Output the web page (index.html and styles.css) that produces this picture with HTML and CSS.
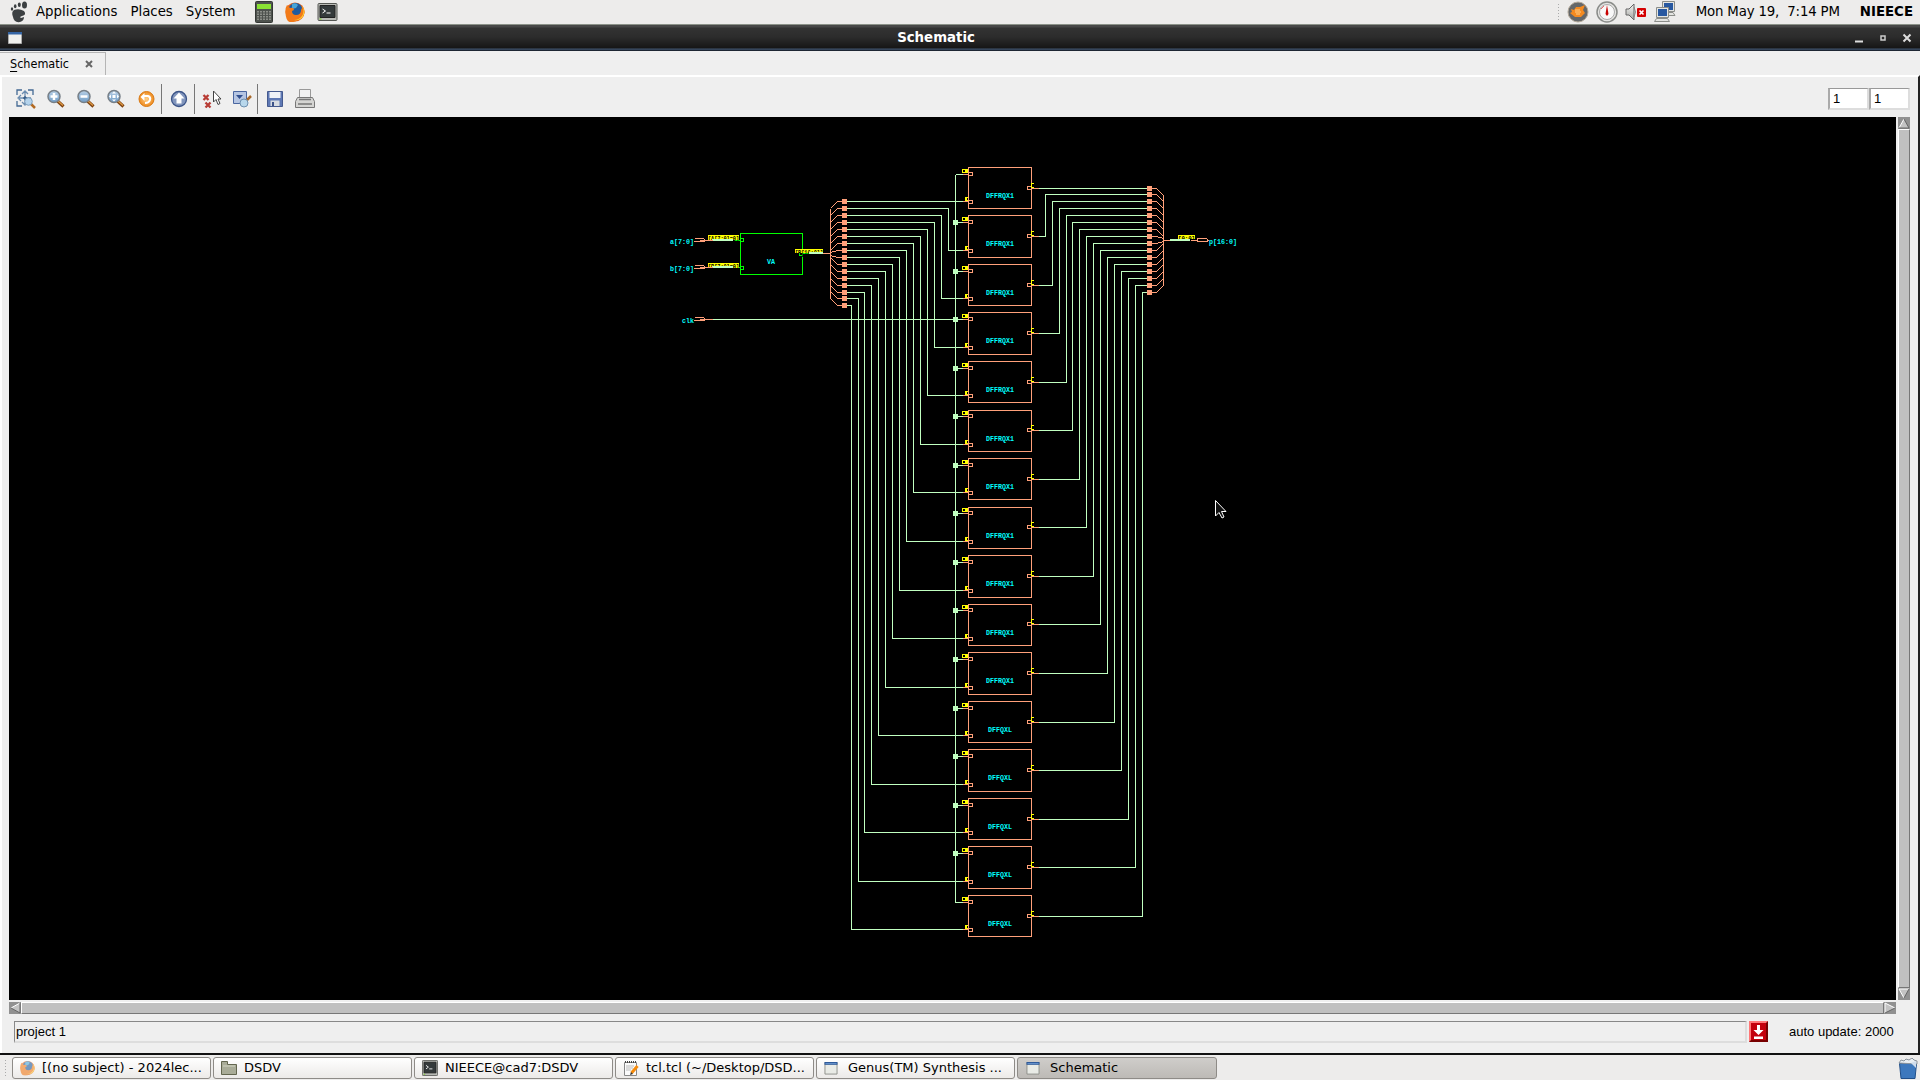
FILE: index.html
```html
<!DOCTYPE html>
<html lang="en">
<head>
<meta charset="utf-8">
<title>Schematic</title>
<link rel="stylesheet" href="styles.css">
</head>
<body>
<svg class="defs" width="0" height="0">
  <defs>
    <linearGradient id="lens" x1="0" y1="0" x2="0" y2="1"><stop offset="0" stop-color="#b9d0e6"/><stop offset="1" stop-color="#6f9cc6"/></linearGradient>
    <radialGradient id="orange"><stop offset="0" stop-color="#ffd08a"/><stop offset="1" stop-color="#ee8a1d"/></radialGradient>
    <linearGradient id="metal" x1="0" y1="0" x2="0" y2="1"><stop offset="0" stop-color="#f4f4f2"/><stop offset="1" stop-color="#a3a5a2"/></linearGradient>
    <symbol id="mag" viewBox="0 0 20 20"><path d="M11.5 12l6 5.500" stroke="#7d4210" stroke-width="3.200"/><path d="M12 12l5 4.500" stroke="#e19a45" stroke-width="1.200"/><circle cx="8" cy="7.500" r="6" fill="url(#lens)" stroke="#777f87" stroke-width="1.500"/></symbol>
    <symbol id="win" viewBox="0 0 14 14"><path d="M.5.5h13v12.500H.5z" fill="#e9ebe6" stroke="#8b8e88"/><path d="M0 0h14v3H0z" fill="#2b5797"/><path d="M1 1h12v1H1z" fill="#6c9ad2"/></symbol>
    <symbol id="fox" viewBox="0 0 20 20"><circle cx="10" cy="10" r="9.500" fill="#e8641b"/><circle cx="10.500" cy="8" r="7" fill="#1e5b9e"/><path d="M7 2q4-2 6 1l-2 3-4 1z" fill="#46a5d8"/><path d="M2 3l3 3q4-1 4 2l-2 1q0 4 4 4 5 0 5-5 2-3 0-5 4 3 3.500 8T10 19.500 0.500 11Q0 6 2 3z" fill="#f27a18"/><path d="M17 4q3 5 0 10-3 4-8 4 8 1 10-6 1-5-2-8z" fill="#ffd130"/></symbol>
    <symbol id="term" viewBox="0 0 20 18"><rect x=".5" y=".5" width="19" height="17" rx="1" fill="#b8bab5" stroke="#555753"/><path d="M2.500 2.500h15v12h-15z" fill="#343a3b" stroke="#222"/><path d="M5 6l3 2-3 2M9 10h4" fill="none" stroke="#fff"/><path d="M2 16h2" stroke="#73d216"/></symbol>
  </defs>
</svg>

<header class="panel">
  <svg class="foot" width="18" height="22" viewBox="0 0 18 22"><g fill="#3c4042"><ellipse cx="14.500" cy="4" rx="2.500" ry="3.500"/><ellipse cx="9.300" cy="3.800" rx="1.500" ry="2.300"/><ellipse cx="5.200" cy="5.300" rx="1.300" ry="2"/><ellipse cx="2" cy="8" rx="1.200" ry="1.700"/><path d="M4 9q5-2 10 1 3 4-2 5-3 1-1 2l3-1q0 4-4 5-6 1-7-5-2-5 1-7z"/></g></svg>
  <nav class="menus"><span>Applications</span><span>Places</span><span>System</span></nav>
  <svg class="calc" width="20" height="22" viewBox="0 0 20 22"><rect x="1.500" y=".5" width="17" height="21" rx="1" fill="#4e524e" stroke="#353835"/><path d="M3 3h14v5H3z" fill="#8ae234"/><path d="M4 10v10M7 10v10M10 10v10M13 10v10M16 10v10" stroke="#8b8e88" stroke-width="2" stroke-dasharray="1.500 1"/></svg>
  <svg class="ff" width="20" height="20"><use href="#fox"/></svg>
  <svg width="21" height="18"><use href="#term"/></svg>
  <div class="tray">
    <i class="grip"></i>
    <svg width="22" height="22" viewBox="0 0 22 22"><circle cx="11" cy="11" r="10" fill="#646769" stroke="#b3a99a"/><path d="M4 8l3 1 2-3h4l5-2-2 5 2 3-4 4H8l-5-4 2-1z" fill="#f48a20"/><path d="M8 9h5M8 11h6M9 13h4" stroke="#ffd08a"/></svg>
    <svg class="gauge" width="22" height="22" viewBox="0 0 22 22"><circle cx="11" cy="11" r="10" fill="#e5e5e3" stroke="#8a8c89" stroke-width="1.500"/><circle cx="11" cy="11" r="7.500" fill="#f8f8f8" stroke="#aaa"/><path d="M11 4l1.500 9-1.500 2-1.500-2z" fill="#c80000"/><path d="M5 8l3-3" stroke="#e66"/></svg>
    <svg width="22" height="20" viewBox="0 0 22 20"><path d="M1 7h3l5-5v16l-5-5H1z" fill="url(#metal)" stroke="#666"/><path d="M9 5q3 5 0 10" fill="none" stroke="#888"/><rect x="12" y="6" width="9" height="9" rx="1" fill="#d40000"/><path d="M14.500 8.500l4 4m0-4l-4 4" stroke="#fff" stroke-width="1.700"/></svg>
    <svg class="net" width="22" height="22" viewBox="0 0 22 22"><g stroke="#8b8d89" fill="#e4e5e2"><path d="M8.500.5h12v10h-12z"/><path d="M9 14.500h12l-2-3h-8zM.5 20.500h15l-2-3h-11z"/></g><path d="M10 2h9v7h-9z" fill="#2858a0"/><path d="M2.500 6.500h12v10h-12z" fill="#e4e5e2" stroke="#8b8d89"/><path d="M4 8h9v7H4z" fill="#2858a0"/></svg>
    <span class="clock">Mon May 19,&nbsp; 7:14 PM</span><b class="user">NIEECE</b>
  </div>
</header>

<div class="titlebar">
  <svg width="14" height="12" preserveAspectRatio="none" viewBox="0 0 14 12"><path d="M.5.5h13v11H.5z" fill="#f0f1ee" stroke="#aaa"/><path d="M0 0h14v2.500H0z" fill="#3465a4"/></svg>
  <b>Schematic</b>
  <svg class="wm" width="60" height="12" viewBox="0 0 60 12"><path d="M0 9.500h8" stroke="#ddd" stroke-width="2"/><path d="M26 4h4v4h-4z" fill="none" stroke="#ccc" stroke-width="1.500"/><path d="M48.500 2.500l7 7m0-7l-7 7" stroke="#ddd" stroke-width="2"/></svg>
</div>

<main class="window">
  <div class="tabs"><div class="tab"><span><u>S</u>chematic</span><svg width="8" height="8" viewBox="0 0 8 8"><path d="M1 1l6 6m0-6l-6 6" stroke="#666" stroke-width="2"/></svg></div></div>
  <div class="body">
    <div class="toolbar">
      <div class="tools">
        <svg width="20" height="20" viewBox="0 0 20 20"><g fill="none" stroke="#446a94" stroke-width="1.300"><path d="M1 6V1h5M12 1h5v5M1 12v5h5"/><path d="M9 3v12M3 9h12M6 5l3-3 3 3M5 6L2 9l3 3M6 13l3 3 3-3" stroke="#6c8db0"/></g><path d="M7 9h4M9 7v4" stroke="#234a78"/><path d="M14.500 14.500l4.500 4.500" stroke="#b26a22" stroke-width="2.500"/><circle cx="12.500" cy="12.500" r="3.800" fill="#b4d3ec" stroke="#7c9dbb"/></svg>
        <svg width="20" height="20" viewBox="0 0 20 20"><use href="#mag"/><path d="M8 4v7M4.500 7.500h7" stroke="#fff" stroke-width="2.500"/></svg>
        <svg width="20" height="20" viewBox="0 0 20 20"><use href="#mag"/><path d="M4.500 7.500h7" stroke="#fff" stroke-width="2.500"/></svg>
        <svg width="20" height="20" viewBox="0 0 20 20"><use href="#mag"/><path d="M8 2.500l2 2H6zM8 12.500l2-2H6zM3 7.500l2-2v4zM13 7.500l-2-2v4zM6.500 6h3v3h-3z" fill="#fff"/></svg>
        <svg width="20" height="20" viewBox="0 0 20 20"><circle cx="10.500" cy="10" r="7.500" fill="url(#orange)" stroke="#d97a15"/><path d="M7 7h5q3 1 2 4-1 3-5 3" fill="none" stroke="#fff" stroke-width="2"/><path d="M4.500 8l4-4v8z" fill="#fff"/></svg>
        <i class="sep"></i>
        <svg width="20" height="20" viewBox="0 0 20 20"><circle cx="10" cy="10" r="7.500" fill="#8296bd" stroke="#3b5488" stroke-width="1.300"/><path d="M10 3.500l5.500 6H12.500v5h-5v-5h-3z" fill="#fff"/></svg>
        <i class="sep"></i>
        <svg width="20" height="20" viewBox="0 0 20 20"><path d="M1.500 6l5 5m0-5l-5 5M3.500 13.500l5 5m0-5l-5 5" stroke="#b83c35" stroke-width="2.300"/><path d="M11.500 2v11l2.500-2.500 2 5 2-1-2-4.500h3z" fill="#fff" stroke="#444"/></svg>
        <svg width="20" height="20" viewBox="0 0 20 20"><path d="M1.500 2.500h13v12h-13z" fill="#b5c5e2" stroke="#4a66a0"/><path d="M4 6h7l-3.500 4z" fill="#314f8f"/><path d="M14 12l5-5" stroke="#a9692b" stroke-width="2.500"/><circle cx="12" cy="14" r="4" fill="#b8d7eb" stroke="#6e8fae"/></svg>
        <i class="sep"></i>
        <svg width="20" height="20" viewBox="0 0 20 20"><path d="M2.500 2.500h15v15h-15z" fill="#5e78b4" stroke="#455a8e"/><path d="M4.500 3h11v6h-11z" fill="#f0f3f8"/><path d="M5.500 11.500h9V17h-9z" fill="#d7dce2"/><path d="M7 13h2v4H7z" fill="#3c5288"/></svg>
        <svg width="20" height="20" viewBox="0 0 20 20"><path d="M4.500.5h11v10h-11z" fill="#f2f2f2" stroke="#999"/><path d="M2.500 8.500h15l2 4v6H.5v-6z" fill="#d5d5d3" stroke="#777"/><path d="M4 10.500h12M3 15h14" stroke="#777" stroke-width="1.500"/></svg>
      </div>
      <div class="fields"><div>1</div><div>1</div></div>
    </div>
    <div class="view">
      <svg id="sheet" width="1887" height="883" viewBox="9 117 1887 883" shape-rendering="crispEdges"></svg>
      <div class="vscroll"><svg width="12" height="12" viewBox="0 0 12 12"><path d="M0 0h12v12H0z" fill="#919191"/><path d="M1 11l5-9 5 9z" fill="#c3c3c3"/><path d="M1 11l5-9" stroke="#fff"/><path d="M6 2l5 9H1" fill="none" stroke="#666"/></svg><i class="thumb"></i><svg width="12" height="12" viewBox="0 0 12 12"><path d="M0 0h12v12H0z" fill="#919191"/><path d="M1 1h10L6 10z" fill="#c3c3c3"/><path d="M6 10L1 1h10" fill="none" stroke="#fff"/><path d="M11 1l-5 9" stroke="#666"/></svg></div>
      <div class="hscroll"><svg width="12" height="12" viewBox="0 0 12 12"><path d="M0 0h12v12H0z" fill="#919191"/><path d="M11 1v10L2 6z" fill="#c3c3c3"/><path d="M2 6l9-5" stroke="#fff"/><path d="M2 6l9 5V1" fill="none" stroke="#666"/></svg><i class="thumb"></i><svg width="12" height="12" viewBox="0 0 12 12"><path d="M0 0h12v12H0z" fill="#919191"/><path d="M1 1v10l10-5z" fill="#c3c3c3"/><path d="M1 11V1l10 5" fill="none" stroke="#fff"/><path d="M1 11l10-5" stroke="#666"/></svg></div>
    </div>
    <div class="status">
      <div class="message">project 1</div>
      <div class="stop"><svg width="11" height="14" viewBox="0 0 11 14"><path d="M4 0h3v5h3.500L5.500 10 .5 5H4zM1 11.500h9V14H1z" fill="#fff"/></svg></div>
      <span>auto update: 2000</span>
    </div>
  </div>
</main>

<footer class="taskbar">
  <i class="grip"></i>
  <div class="task"><svg class="dim" width="15" height="16" viewBox="0 0 20 20"><use href="#fox"/></svg><span>[(no subject) - 2024lec...</span></div>
  <div class="task"><svg width="16" height="16" viewBox="0 0 16 16"><path d="M.5 1.500h6v3h9v10H.5z" fill="#a9ac98" stroke="#63664f"/><path d="M2 6h12" stroke="#d3d6c4"/></svg><span>DSDV</span></div>
  <div class="task"><svg width="16" height="16" viewBox="0 0 20 18" preserveAspectRatio="none"><use href="#term"/></svg><span>NIEECE@cad7:DSDV</span></div>
  <div class="task"><svg width="16" height="16" viewBox="0 0 16 16"><path d="M1.500 2.500h12v13h-12z" fill="#fafafa" stroke="#888"/><path d="M2 2h11" stroke="#444" stroke-width="2" stroke-dasharray="1 1"/><path d="M3 6h8M3 8h7M3 10h5" stroke="#bbb"/><path d="M14.500 6l-6 7" stroke="#f58a0a" stroke-width="3"/><path d="M7 15l1-3 2 2z" fill="#333"/></svg><span>tcl.tcl (~/Desktop/DSD...</span></div>
  <div class="task app"><svg width="14" height="13" viewBox="0 0 14 13"><use href="#win"/></svg><span>Genus(TM) Synthesis ...</span></div>
  <div class="task app active"><svg width="14" height="13" viewBox="0 0 14 13"><use href="#win"/></svg><span>Schematic</span></div>
  <svg class="trash" width="20" height="21" viewBox="0 0 20 21"><path d="M1.500 5.500h17l-1.500 15H3z" fill="#3d78bd" stroke="#214f89"/><path d="M1 5l2-3 3 1 2-2 3 1 3-2 2 2 3 1v3z" fill="#e9eef2" stroke="#8b949d"/><path d="M13 5l5-2v7z" fill="#cfdded"/></svg>
</footer>
<script src="schematic.js"></script>
</body>
</html>
```
FILE: styles.css
```css
* { box-sizing: border-box; }
html, body { margin: 0; height: 100%; }
body { display: flex; flex-direction: column; width: 1920px; height: 1080px; overflow: hidden; background: #edeceb; color: #000; font: 13.330px/22px "DejaVu Sans", sans-serif; }
svg { display: block; flex: none; }
.defs { position: absolute; }
.panel { display: flex; align-items: center; height: 25px; padding: 0 7px 0 10px; border-bottom: 1px solid #8c9289; background: #edeceb; }
.menus { display: flex; gap: 13px; margin: 0 18px 0 8px; }
.calc { margin-right: 11px; }
.ff { margin-right: 12px; }
.tray { display: flex; align-items: center; margin-left: auto; }
.tray svg { margin-right: 7px; }
.tray .net { margin-right: 20px; }
.clock { letter-spacing: -0.170px; }
.user { margin-left: 20px; }
.grip { width: 4px; height: 18px; background: radial-gradient(circle, #aaa 0.700px, transparent 1px) 0 0 / 3px 3px; }
.tray .grip { margin-right: 6px; }
.titlebar { display: flex; align-items: center; height: 26px; padding: 0 5px 0 8px; background: linear-gradient(#484848 0 2px, #333 3px, #2c2c2c 12px, #161616 23px, #41556f 24px, #11161e 26px); color: #fff; }
.titlebar b { flex: 1; text-align: center; padding-right: 5px; }
.window { display: flex; flex-direction: column; height: 1004px; background: #efefef; border-bottom: 2px solid #111; }
.tabs { height: 24px; }
.tab { display: flex; align-items: center; justify-content: space-between; width: 106px; height: 23px; margin-top: 1px; padding: 0 12px 0 10px; border: solid #b5b5b5; border-width: 1px 1px 0 0; font: 12.500px/20px "DejaVu Sans Condensed", "DejaVu Sans", sans-serif; font-stretch: condensed; }
.tab u { text-underline-offset: 3px; }
.body { flex: 1; border: 2px solid #fff; border-right: 2px solid #222; border-bottom: 0; }
.toolbar { display: flex; align-items: center; justify-content: space-between; height: 40px; padding: 3px 8px 0 14px; }
.tools, .fields { display: flex; align-items: center; }
.tools { gap: 10px; }
.sep { width: 1px; height: 30px; margin: 0 -3px 0 -5px; background: #777; }
.fields div { width: 41px; height: 22px; padding-left: 3px; border: 1px solid #999; border-right: 2px solid #ddd; border-bottom: 2px solid #ddd; border-left: 2px solid #aaa; background: #fff; font: 13px/19px "Liberation Sans", sans-serif; }
.view { display: grid; grid-template: 883px 12px / 1887px 12px; gap: 2px; padding-left: 7px; }
#sheet { background: #000; }
.vscroll, .hscroll { display: flex; background: #c0c0c0; }
.vscroll { flex-direction: column; }
.thumb { flex: 1; border: 1px solid #fff; border-right-color: #777; border-bottom-color: #777; background: #c0c0c0; }
.status { display: flex; align-items: center; height: 23px; margin-top: 6px; padding-left: 12px; font: 13px/22px "Liberation Sans", sans-serif; }
.message { width: 1733px; height: 22px; padding-left: 1px; border: solid #888; border-width: 1px 2px 2px 1px; border-right-color: #ddd; border-bottom-color: #ddd; line-height: 20px; }
.stop { display: grid; place-items: center; width: 19px; height: 21px; margin: 0 21px 0 2px; background: #c4000c; border: 2px solid #f77; border-right-color: #700; border-bottom-color: #700; }
.taskbar { display: flex; align-items: center; gap: 2px; flex: 1; padding: 2px 2px 1px 4px; background: #edeceb; }
.taskbar .grip { margin-right: 2px; }
.task { display: flex; align-items: center; gap: 7px; width: 199px; height: 22px; padding-left: 7px; border: 1px solid #8e8b87; border-radius: 3px; background: linear-gradient(#fff, #eceae8); line-height: 20px; white-space: nowrap; }
.task span { font-size: 13px; }
.app { gap: 10px; }
.active { background: linear-gradient(#cfcdca, #bdbab6); width: 200px; padding-left: 8px; }
.dim { opacity: .6; }
.trash { margin-left: auto; }
.wire { stroke: #c0ffc0; fill: none; }
.node { fill: #c0ffc0; }
.cell { stroke: #ffa07a; fill: none; }
.tap { fill: #ffa07a; }
.block { stroke: #0f0; fill: none; }
.label { fill: #0ff; font: bold 7.500px "Liberation Mono", monospace; }
.tag { fill: #ff0; }
.tagtext { fill: #000; font: bold 8px "Liberation Mono", monospace; }
.hole { fill: #000; }
```
FILE: schematic.js
```js
const sheet = document.getElementById("sheet");
const out = [];
const path = (cls, d) => out.push(`<path class="${cls}" transform="translate(.5 .5)" d="${d}"/>`);
const rect = (cls, x, y, w, h) => out.push(`<rect class="${cls}" x="${x}" y="${y}" width="${w}" height="${h}"/>`);
const text = (cls, x, y, w, s) => out.push(`<text class="${cls}" x="${x}" y="${y}" textLength="${w}" lengthAdjust="spacingAndGlyphs">${s}</text>`);

const leftTaps = [201, 208, 215, 222, 229, 236, 243, 250, 257, 264, 271, 278, 285, 292, 298, 305];
const rightTaps = [188, 194, 201, 208, 215, 222, 229, 236, 243, 250, 257, 264, 271, 278, 285, 292];
const leftX = [0, 948, 941, 934, 927, 920, 913, 906, 899, 892, 885, 878, 871, 864, 858, 851];
const rightX = [0, 1045, 1052, 1059, 1066, 1072, 1079, 1086, 1093, 1100, 1107, 1114, 1121, 1128, 1135, 1142];

// Offset of the diagonal's trunk end: the taps fan out from the bus entry.
const fan = i => i < 7 ? 7 : i === 7 ? 2 : i === 8 ? -2 : -7;

// Bus rippers and their trunks
path("cell", "M830 208V298M818 253H830M1163 194V285M1163 240H1173");
for (let i = 0; i < 16; i++) {
  const l = leftTaps[i], r = rightTaps[i];
  path("cell", `M830 ${l + fan(i)}L837 ${l}H842M1151 ${r}H1156L1163 ${r + fan(i)}`);
}

// Clock spine
path("wire", "M712 319H955M955 174V902");

for (let i = 0; i < 16; i++) {
  const step = 48.54 * i;
  const top = Math.round(166.8 + step), bottom = Math.round(208.2 + step);
  const ck = Math.round(173.6 + step), d = Math.round(201.2 + step), q = Math.round(187.6 + step);
  const l = leftTaps[i], r = rightTaps[i];
  path("wire", i ? `M845 ${l}H${leftX[i]}V${d}H962` : `M845 ${l}H962`);
  path("wire", i ? `M1038 ${q}H${rightX[i]}V${r}H1147` : `M1038 ${q}H1147`);
  path("wire", `M955 ${ck}H962`);
  if (i && i < 15) rect("node", 953, ck - 2, 5, 5);
  rect("tag", 962, ck - 5, 6, 4);
  rect("hole", 963, ck - 4, 2, 2);
  rect("tag", 965, d - 4, 3, 4);
  rect("hole", 967, d - 3, 1, 2);
  path("cell", `M968 ${top}H1031V${bottom}H968Z`);
  path("cell", `M962 ${ck}H968M968 ${ck - 2}H972V${ck + 1}H968M962 ${d}H968M968 ${d - 1}H972V${d + 2}H968M1031 ${q}H1038M1027 ${q - 2}H1031V${q + 1}H1027Z`);
  rect("tag", 1031, q - 5, 1, 5);
  rect("tag", 1031, q - 5, 3, 1);
  rect("tag", 1031, q - 1, 3, 1);
  i < 11 ? text("label", 986, top + 31, 28, "DFFRQX1") : text("label", 988, top + 31, 24, "DFFQXL");
}
for (let i = 0; i < 16; i++) {
  rect("tap", 842, leftTaps[i] - 2, 5, 5);
  rect("tap", 1147, rightTaps[i] - 2, 5, 5);
}

// Multiplier block, its pins and net tags
path("block", "M740 233H802V274H740ZM733 240H740M740 238H743V241H740M733 267H740M740 266H743V269H740M802 253H809M802 252H799V255H802");
rect("tag", 708, 235, 31, 5);
rect("tag", 708, 263, 31, 5);
rect("tag", 795, 249, 28, 4);
rect("tag", 1178, 235, 17, 4);
text("tagtext", 708, 240.500, 31, "[A[7:0]=0]");
text("tagtext", 708, 268.500, 31, "[B[7:0]=0]");
text("tagtext", 795, 254.500, 28, "[P[16:0]]");
text("tagtext", 1178, 240.500, 17, "[0:0]");
rect("node", 712, 239, 21, 2);
rect("node", 712, 266, 21, 2);
rect("node", 809, 252, 14, 2);
rect("node", 1170, 239, 20, 2);
text("label", 767, 264, 8, "VA");

// Ports
for (const y of [240, 267, 319]) path("cell", `M694 ${y - 2}H703L705 ${y}H712M705 ${y}L703 ${y + 1}H694Z`);
path("cell", "M1190 240H1197M1197 238H1206L1208 240L1206 241H1197Z");
text("label", 670, 244, 24, "a[7:0]");
text("label", 670, 271, 24, "b[7:0]");
text("label", 682, 323, 12, "clk");
text("label", 1209, 244, 28, "p[16:0]");

// Mouse pointer
out.push('<path shape-rendering="auto" d="M1215.500 500.500V516l3.500-3.500 3 5.500 2-1-2.500-5.500h4.500z" fill="#111" stroke="#fff"/>');
sheet.innerHTML = out.join("");
```
